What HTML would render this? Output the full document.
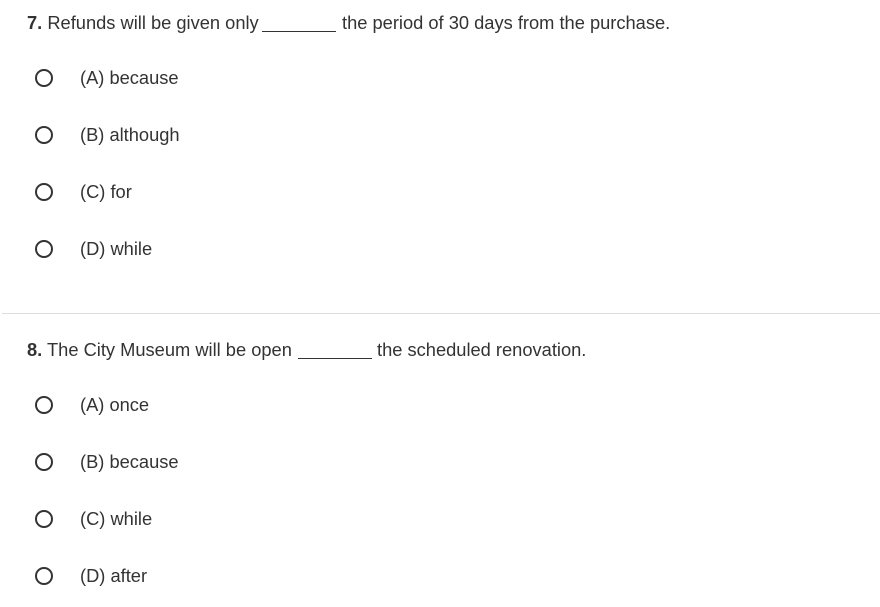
<!DOCTYPE html>
<html><head><meta charset="utf-8"><style>
body{margin:0;width:880px;height:607px;background:#fff;position:relative;overflow:hidden;font-family:"Liberation Sans",Arial,sans-serif;color:#333;font-size:18.3px}
.t{position:absolute;white-space:nowrap;line-height:20px}
.b{position:absolute;height:0;border-bottom:1.3px solid #333}
.r{position:absolute;left:35px;width:14px;height:14px;border:2px solid #333;border-radius:50%}
.hr{position:absolute;left:2px;right:0;top:313px;border-top:1px solid #ddd}
</style></head><body>
<div class="t" style="left:27px;top:13px"><b>7.</b> Refunds will be given only</div>
<div class="b" style="left:262px;width:74px;top:31px"></div>
<div class="t" style="left:342px;top:13px">the period of 30 days from the purchase.</div>
<div class="r" style="top:69px"></div><div class="t" style="left:80px;top:68px">(A) because</div>
<div class="r" style="top:126px"></div><div class="t" style="left:80px;top:125px">(B) although</div>
<div class="r" style="top:183px"></div><div class="t" style="left:80px;top:182px">(C) for</div>
<div class="r" style="top:240px"></div><div class="t" style="left:80px;top:239px">(D) while</div>
<div class="hr"></div>
<div class="t" style="left:27px;top:340px"><b>8.</b> The City Museum will be open</div>
<div class="b" style="left:298px;width:74px;top:358px"></div>
<div class="t" style="left:377px;top:340px">the scheduled renovation.</div>
<div class="r" style="top:396px"></div><div class="t" style="left:80px;top:395px">(A) once</div>
<div class="r" style="top:453px"></div><div class="t" style="left:80px;top:452px">(B) because</div>
<div class="r" style="top:510px"></div><div class="t" style="left:80px;top:509px">(C) while</div>
<div class="r" style="top:567px"></div><div class="t" style="left:80px;top:566px">(D) after</div>
</body></html>
